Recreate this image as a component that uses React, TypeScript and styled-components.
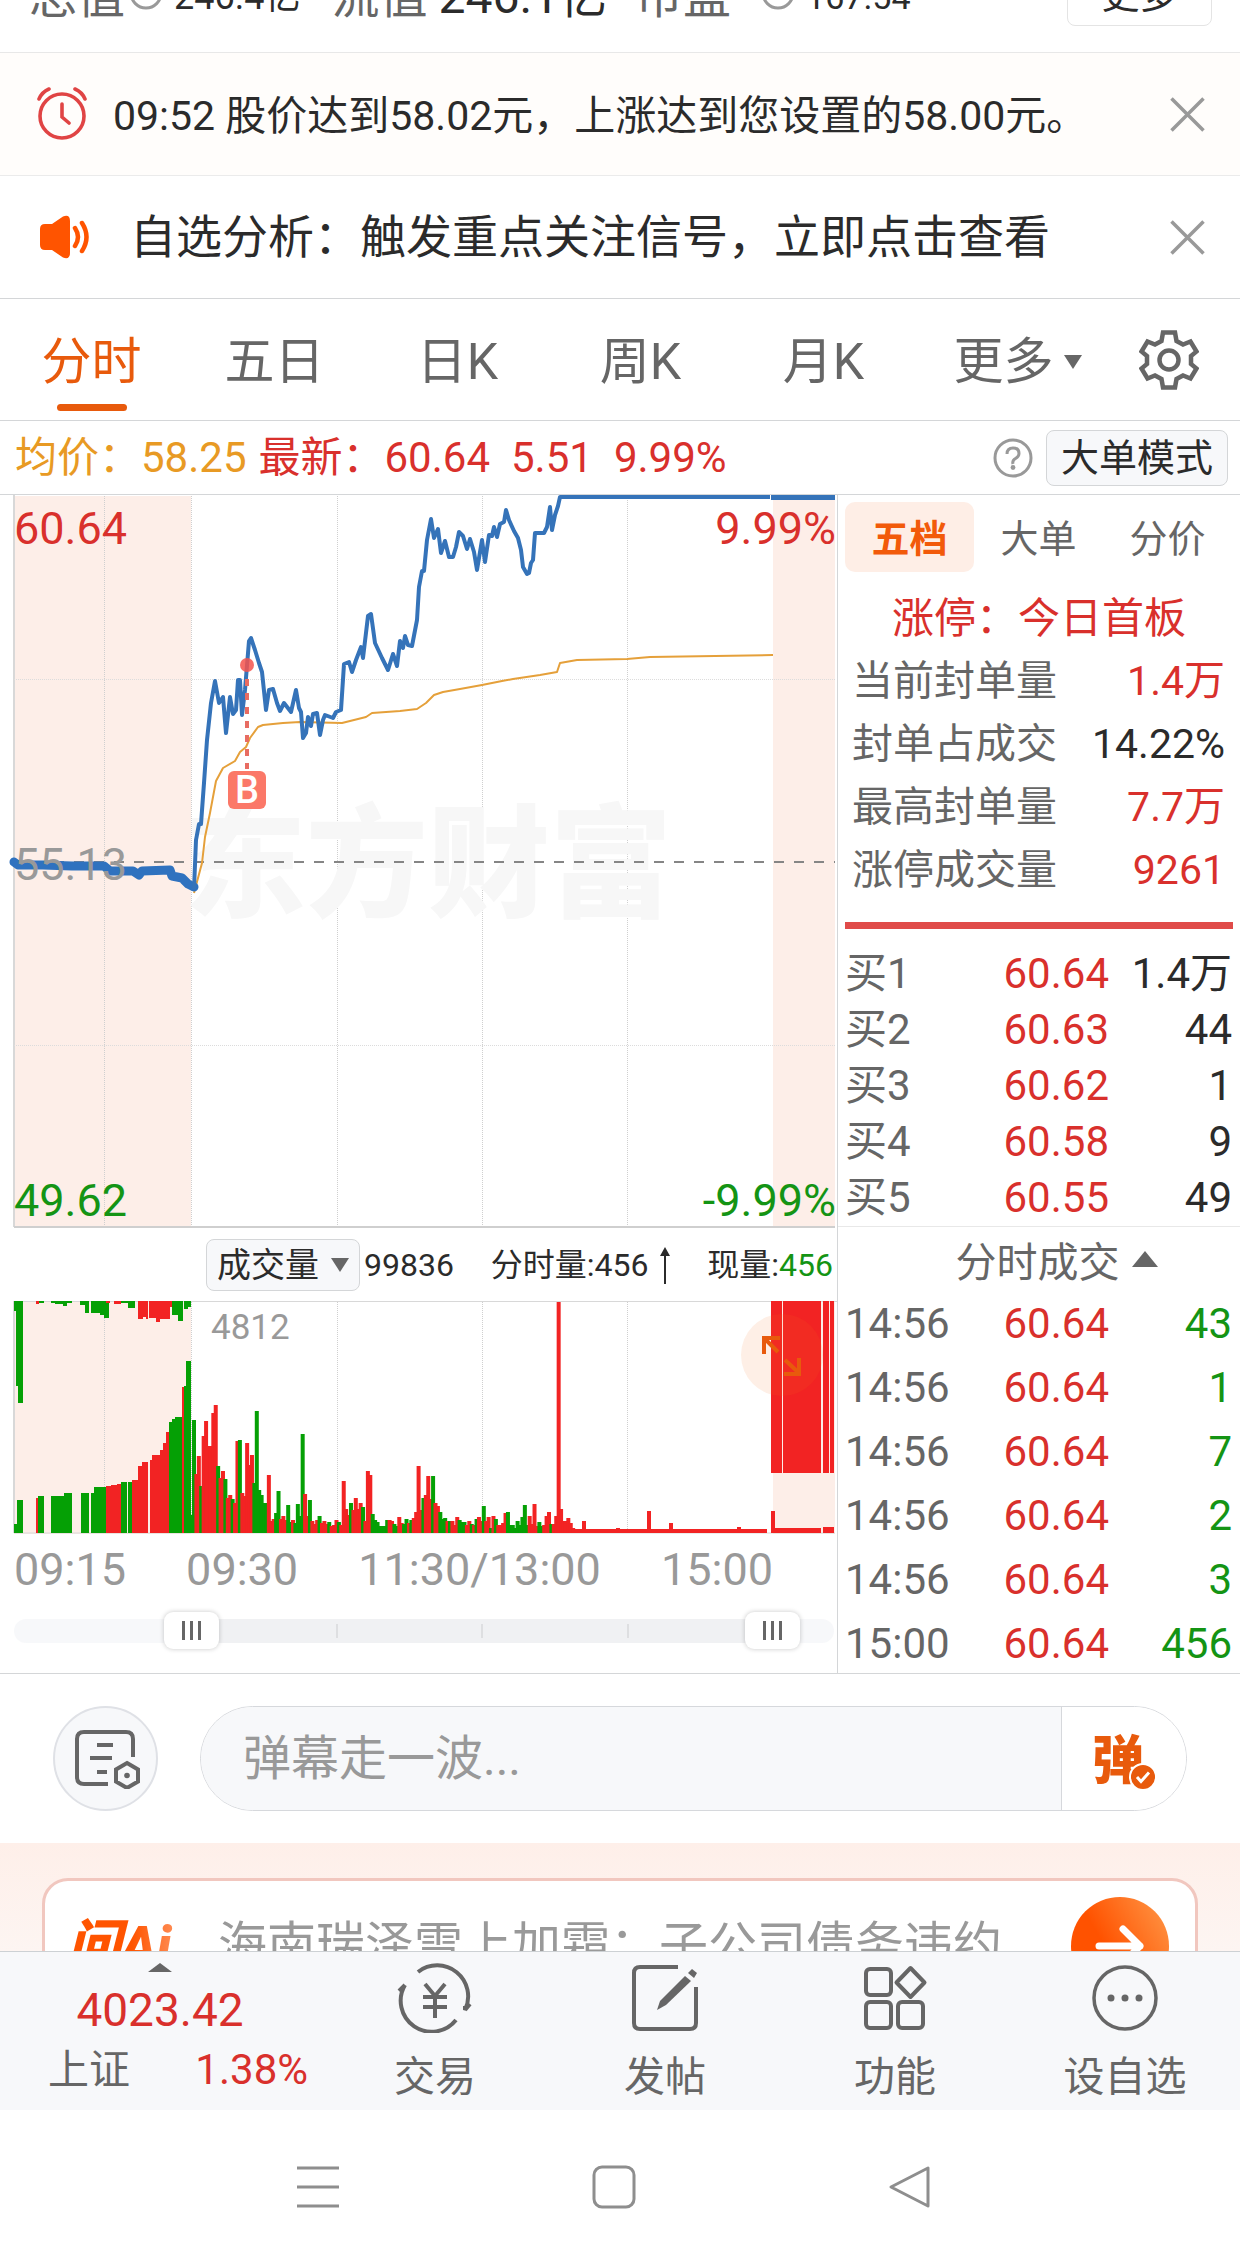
import React, { useState } from "react";
import styled, { createGlobalStyle, css } from "styled-components";

const RED = "#d9302c";
const GREEN = "#149414";
const ORANGE = "#e85a0c";
const GREY = "#666666";
const MUTED = "#999999";
const INK = "#2b2b2b";
const LINE = "#d4d6d8";
const PANEL = "#f7f8fa";
const BLUSH = "#fdeee8";
const FONT = 'Roboto, "Noto Sans CJK SC", sans-serif';

const GlobalStyle = createGlobalStyle`
  *, *::before, *::after { box-sizing: border-box; }
  body { margin: 0; background: #fff; font-family: ${FONT}; color: ${INK}; }
  button, input { font-family: inherit; }
  svg { display: block; flex: none; }
`;

const Page = styled.div`
  display: flex;
  flex-direction: column;
  overflow: hidden;
`;

const PlainButton = styled.button`
  display: flex;
  align-items: center;
  justify-content: center;
  padding: 0;
  border: 0;
  background: none;
  color: inherit;
  white-space: nowrap;
  cursor: pointer;
`;

/* ---------- header figures ---------- */

const Figures = styled.header`
  display: flex;
  align-items: flex-end;
  height: 53px;
  padding: 0 28px 26px 29px;
  border-bottom: 1px solid #e8e8e8;
  overflow: hidden;
`;

const FigureLabel = styled.span`
  font-size: 48px;
  line-height: 60px;
  margin-bottom: -1px;
  color: ${GREY};
  white-space: nowrap;
`;

const FigureValue = styled.span<{ $size: number }>`
  font-size: ${(p) => p.$size}px;
  line-height: ${(p) => (p.$size > 40 ? 60 : 48)}px;
  margin: ${(p) => (p.$size > 40 ? "0 28px -1px 11px" : "0 31px 5px 11px")};
  white-space: nowrap;
`;

const RingGap = styled.span<{ $wide?: boolean }>`
  margin: 0 0 16px ${(p) => (p.$wide ? 30 : 4)}px;
`;

const OutlineButton = styled(PlainButton)<{ $filled?: boolean }>`
  height: 56px;
  padding: 0 14px;
  border: 1px solid ${LINE};
  border-radius: 8px;
  background: ${(p) => (p.$filled ? PANEL : "#fff")};
  font-size: 38px;
  line-height: 48px;
  color: ${INK};
`;

const MoreButton = styled(OutlineButton)`
  align-items: flex-start;
  width: 145px;
  margin-left: auto;
  padding: 0;
  border-color: #e4e4e4;
`;

/* ---------- notices ---------- */

const Notice = styled.section<{ $warm?: boolean }>`
  display: flex;
  align-items: center;
  height: 123px;
  padding: 0 35px 0 36px;
  border-bottom: 1px solid ${(p) => (p.$warm ? "#ebebeb" : LINE)};
  background: ${(p) => (p.$warm ? "#fffdfb" : "#fff")};
`;

const NoticeText = styled.p<{ $large?: boolean }>`
  flex: 1;
  margin: 0 0 0 ${(p) => (p.$large ? 40 : 25)}px;
  padding-top: ${(p) => (p.$large ? 0 : 4)}px;
  font-size: ${(p) => (p.$large ? 46 : 41)}px;
  line-height: 60px;
  white-space: nowrap;
`;

/* ---------- period tabs ---------- */

const PeriodBar = styled.nav`
  display: grid;
  grid-template-columns: repeat(6, minmax(0, 1fr)) 142px;
  height: 122px;
  border-bottom: 1px solid ${LINE};
`;

const PeriodTab = styled(PlainButton)<{ $active?: boolean; $menu?: boolean }>`
  position: relative;
  gap: 10px;
  padding-top: 4px;
  padding-left: ${(p) => (p.$menu ? 22 : 0)}px;
  font-size: 50px;
  line-height: 60px;
  color: ${(p) => (p.$active ? ORANGE : GREY)};
  ${(p) =>
    p.$active &&
    css`
      &::after {
        content: "";
        position: absolute;
        bottom: 9px;
        left: 50%;
        width: 70px;
        height: 7px;
        margin-left: -35px;
        border-radius: 4px;
        background: ${ORANGE};
      }
    `}
`;

const SummaryBar = styled.section`
  display: flex;
  align-items: center;
  height: 74px;
  padding: 0 12px 0 15px;
  border-bottom: 1px solid ${LINE};
  font-size: 42px;
  line-height: 60px;
  color: ${RED};
  white-space: nowrap;
`;

const Average = styled.span`
  margin-right: 12px;
  color: #e89a24;
`;

const Figure = styled.span`
  margin-right: 21px;
`;

const SummaryActions = styled.div`
  display: flex;
  align-items: center;
  gap: 13px;
  margin-left: auto;
`;

/* ---------- main split ---------- */

const Split = styled.main`
  display: grid;
  grid-template-columns: minmax(0, 838fr) minmax(0, 402fr);
  border-bottom: 1px solid ${LINE};
`;

const ChartColumn = styled.div`
  display: flex;
  flex-direction: column;
  border-right: 1px solid ${LINE};
`;

const Chart = styled.svg`
  width: 100%;
  height: auto;
  font-family: ${FONT};
`;

const VolumeBar = styled.div`
  display: flex;
  align-items: center;
  justify-content: space-between;
  height: 73px;
  padding: 0 4px 0 206px;
  font-size: 32px;
  line-height: 48px;
  white-space: nowrap;
`;

const VolumeGroup = styled.div<{ $gap: number }>`
  display: flex;
  align-items: center;
  gap: ${(p) => p.$gap}px;
`;

const VolumeButton = styled(OutlineButton)`
  height: 52px;
  padding: 0 10px;
  gap: 12px;
  font-size: 34px;
`;

const Current = styled.span`
  color: ${GREEN};
`;

const TimeAxis = styled.div`
  display: flex;
  justify-content: space-between;
  padding: 6px 64px 0 14px;
  font-size: 45px;
  line-height: 60px;
  color: ${MUTED};
`;

const Range = styled.div`
  position: relative;
  height: 37px;
  margin: 12px 3px 24px 14px;
`;

const Rail = styled.div`
  position: absolute;
  inset: 7px 0 6px;
  border-radius: 12px;
  background: linear-gradient(90deg, ${PANEL} 22%, #f0f1f3 22% 92%, ${PANEL} 92%);
`;

const Tick = styled.span`
  position: absolute;
  top: 5px;
  width: 2px;
  height: 14px;
  background: #dedfe1;
`;

const Knob = styled.input`
  position: absolute;
  inset: 0;
  width: 100%;
  height: 37px;
  margin: 0;
  appearance: none;
  background: none;
  pointer-events: none;
  &::-webkit-slider-thumb {
    appearance: none;
    width: 55px;
    height: 37px;
    border: 0;
    border-radius: 9px;
    background:
      linear-gradient(#666, #666) 18px 9px / 3px 19px no-repeat,
      linear-gradient(#666, #666) 26px 9px / 3px 19px no-repeat,
      linear-gradient(#666, #666) 34px 9px / 3px 19px no-repeat,
      #fff;
    box-shadow: 0 0 5px rgba(0, 0, 0, 0.22);
    pointer-events: auto;
  }
`;

/* ---------- order panel ---------- */

const OrderColumn = styled.aside`
  display: flex;
  flex-direction: column;
  padding-top: 7px;
  line-height: 48px;
  white-space: nowrap;
`;

const OrderTabs = styled.div`
  display: grid;
  grid-template-columns: repeat(3, minmax(0, 1fr));
  padding: 0 8px 0 7px;
`;

const OrderTab = styled(PlainButton)<{ $active?: boolean }>`
  height: 70px;
  padding-bottom: 3px;
  border-radius: 10px;
  font-size: 38px;
  font-weight: ${(p) => (p.$active ? 700 : 400)};
  color: ${(p) => (p.$active ? "#f25a0a" : GREY)};
  background: ${(p) => (p.$active ? "#feeee6" : "none")};
`;

const LimitTitle = styled.h2`
  margin: 15px 0 0;
  font-size: 42px;
  font-weight: 400;
  line-height: 63px;
  text-align: center;
  color: ${RED};
`;

const LimitList = styled.dl`
  margin: 0 7px;
  padding: 0 8px 20px 7px;
  border-bottom: 7px solid #e04b49;
`;

const LimitRow = styled.div`
  display: flex;
  justify-content: space-between;
  font-size: 41px;
  line-height: 63px;
`;

const LimitName = styled.dt`
  color: ${GREY};
`;

const LimitValue = styled.dd<{ $plain?: boolean }>`
  margin: 0;
  color: ${(p) => (p.$plain ? INK : RED)};
`;

const QuoteTable = styled.table<{ $pitch: number; $top: number; $bottom: number }>`
  width: 100%;
  table-layout: fixed;
  border-collapse: collapse;
  font-size: 42px;
  line-height: ${(p) => p.$pitch}px;
  margin: ${(p) => `${p.$top}px 0 ${p.$bottom}px`};
`;

const QuoteName = styled.th`
  width: 126px;
  padding: 0 0 0 7px;
  font-weight: 400;
  text-align: left;
  color: ${GREY};
`;

const QuotePrice = styled.td`
  width: 145px;
  padding: 0;
  text-align: right;
  color: ${RED};
`;

const QuoteSize = styled.td<{ $sell?: boolean }>`
  padding: 0 8px 0 0;
  text-align: right;
  color: ${(p) => (p.$sell ? GREEN : INK)};
`;

const TradesToggle = styled(PlainButton)`
  height: 66px;
  gap: 12px;
  padding: 0 0 2px 35px;
  border-top: 1px solid #e8e8e8;
  font-size: 41px;
  color: ${GREY};
`;

/* ---------- comment bar ---------- */

const CommentBar = styled.form`
  display: flex;
  align-items: center;
  height: 169px;
  padding: 0 53px;
  gap: 42px;
`;

const RoundButton = styled(PlainButton)`
  width: 105px;
  height: 105px;
  border: 2px solid #dfe1e6;
  border-radius: 50%;
  background: ${PANEL};
`;

const CommentField = styled.div`
  display: flex;
  flex: 1;
  height: 105px;
  border: 1px solid #d6d8dc;
  border-radius: 53px;
  overflow: hidden;
`;

const CommentInput = styled.input`
  flex: 1;
  min-width: 0;
  padding: 0 0 0 42px;
  border: 0;
  background: ${PANEL};
  font-size: 48px;
  line-height: 60px;
  &::placeholder { color: ${MUTED}; opacity: 1; }
`;

const BulletButton = styled(PlainButton)`
  position: relative;
  width: 125px;
  padding: 0 12px 4px 0;
  border-left: 1px solid #d6d8dc;
  background: #fff;
  font-size: 52px;
  font-weight: 900;
  color: ${ORANGE};
`;

const Badge = styled.span`
  position: absolute;
  right: 29px;
  bottom: 19px;
`;

/* ---------- AI prompt ---------- */

const AiSection = styled.section`
  height: 108px;
  padding: 35px 42px 0;
  background: linear-gradient(#feefe9, #fdf5f2);
  overflow: hidden;
`;

const AiCard = styled.div`
  display: flex;
  align-items: center;
  height: 136px;
  padding: 0 26px 0 22px;
  border: 3px solid #f1c7bf;
  border-radius: 26px;
  background: #fff;
`;

const AiBrand = styled.strong`
  width: 118px;
  font-size: 54px;
  font-style: italic;
  font-weight: 900;
  line-height: 60px;
  color: transparent;
  background: linear-gradient(90deg, #ff5400 55%, #ff9a68);
  background-clip: text;
  white-space: nowrap;
`;

const AiQuestion = styled.a`
  flex: 1;
  margin-left: 33px;
  font-size: 49px;
  line-height: 60px;
  color: ${MUTED};
  text-decoration: none;
  white-space: nowrap;
`;

const AiGo = styled(PlainButton)`
  width: 98px;
  height: 98px;
  border-radius: 50%;
  background: linear-gradient(60deg, #ff5200 40%, #ff9a4a);
`;

/* ---------- bottom bars ---------- */

const BottomNav = styled.nav`
  display: grid;
  grid-template-columns: 320px repeat(4, minmax(0, 1fr));
  height: 159px;
  border-top: 1px solid #cdd1d4;
  background: ${PANEL};
`;

const IndexCard = styled.a`
  display: flex;
  flex-direction: column;
  align-items: center;
  padding-top: 11px;
  color: ${RED};
  text-decoration: none;
`;

const IndexValue = styled.span`
  margin-top: 8px;
  font-size: 46px;
  line-height: 60px;
`;

const IndexRow = styled.span`
  display: flex;
  align-items: center;
  justify-content: space-between;
  width: 260px;
  margin-left: 36px;
  font-size: 42px;
  line-height: 60px;
`;

const IndexName = styled.span`
  font-size: 41px;
  color: ${GREY};
`;

const NavItem = styled(PlainButton)`
  flex-direction: column;
  justify-content: flex-start;
  padding-top: 11px;
  gap: 14px;
  font-size: 41px;
  line-height: 60px;
  color: ${GREY};
`;

const SystemNav = styled.footer`
  display: flex;
  align-items: center;
  justify-content: center;
  gap: 250px;
  height: 153px;
  padding-right: 12px;
`;

/* ---------- icons ---------- */

const Close = () => (
  <svg width="35" height="35" viewBox="0 0 35 35" stroke="#999" strokeWidth="3.500">
    <path d="M1.5 1.5L33.500 33.500M33.500 1.500L1.500 33.500" />
  </svg>
);

const Ring = () => (
  <svg width="34" height="34" viewBox="0 0 34 34" fill="none" stroke={MUTED} strokeWidth="3">
    <circle cx="17" cy="17" r="15" />
  </svg>
);

const AlarmIcon = () => (
  <svg width="52" height="54" viewBox="0 0 52 54" fill="none" stroke="#e04444" strokeWidth="3.600" strokeLinecap="round">
    <circle cx="26" cy="29" r="22" />
    <path d="M26 17v13l7 6M3 12Q6 5 13 2M49 12Q46 5 39 2" />
  </svg>
);

const SpeakerIcon = () => (
  <svg width="54" height="44" viewBox="0 0 54 44">
    <path
      d="M9 9h7L27 1.500Q34-1 34 6v32q0 7-7 4.500L16 35H9q-5 0-5-5V14q0-5 5-5z"
      fill="#ff5400"
    />
    <path d="M39 13q6 9 0 18M46 8q9 14 0 28" fill="none" stroke="#ff5400" strokeWidth="4.500" strokeLinecap="round" />
  </svg>
);

const GearIcon = () => (
  <svg width="60" height="60" viewBox="-30 -30 60 60" fill="none" stroke={GREY} strokeWidth="4.500">
    <path d="M-6-27.500H6L7.500-19 14-15.500 21.500-18.500 27.500-8.500 22-4V4L27.500 8.500 21.500 18.500 14 15.500 7.500 19 6 27.500H-6L-7.500 19-14 15.500-21.500 18.500-27.500 8.500-22 4V-4L-27.500-8.500-21.500-18.500-14-15.500-7.500-19Z" />
    <circle r="9.500" />
  </svg>
);

const HelpIcon = () => (
  <svg width="40" height="40" viewBox="0 0 40 40" fill="none" stroke={MUTED} strokeWidth="3">
    <circle cx="20" cy="20" r="18" />
    <path d="M14 16q0-6 6-6t6 5.500q0 3-3.500 5T20 26" />
    <circle cx="20" cy="29.500" r="2.400" fill={MUTED} stroke="none" />
  </svg>
);

const Triangle = ({ w, h, up }: { w: number; h: number; up?: boolean }) => (
  <svg width={w} height={h} viewBox="0 0 10 10" preserveAspectRatio="none" fill={GREY}>
    <path d={up ? "M0 10L5 0L10 10Z" : "M0 0H10L5 10Z"} />
  </svg>
);

const UpArrow = () => (
  <svg width="10" height="38" viewBox="0 0 10 38" fill={INK}>
    <path d="M5 1l5 9H6v28H4V10H0z" />
  </svg>
);

const NoteIcon = () => (
  <svg width="68" height="60" viewBox="0 0 68 60" fill="none" stroke={GREY} strokeWidth="4">
    <path d="M61 28V10q0-7-7-7H12q-7 0-7 7v38q0 7 7 7h24" />
    <path d="M25 16h16M18 29h22M25 43h10" />
    <path d="M55 34l11 6.500v12L55 59l-11-6.500v-12z" />
    <circle cx="55" cy="46.500" r="2.800" fill={GREY} stroke="none" />
  </svg>
);

const CheckBadge = () => (
  <svg width="28" height="28" viewBox="0 0 28 28">
    <circle cx="14" cy="14" r="13" fill={ORANGE} stroke="#fff" strokeWidth="2" />
    <path d="M8 14l4 4.500 8-9" fill="none" stroke="#fff" strokeWidth="3" />
  </svg>
);

const TradeIcon = () => (
  <svg width="78" height="70" viewBox="0 0 78 70" fill="none" stroke={GREY} strokeWidth="4">
    <path d="M22 9A31 31 0 0 1 69 47V43M69 47l5-6M60 57A31 31 0 0 1 9 22M9 22l-6 6" />
    <path d="M29 21l10 12 10-12M39 33v22M27 34h24M27 44h24" />
  </svg>
);

const PostIcon = () => (
  <svg width="70" height="70" viewBox="0 0 70 70" fill="none" stroke={GREY} strokeWidth="4">
    <path d="M48 4H10q-6 0-6 6v50q0 6 6 6h50q6 0 6-6V24" />
    <path d="M27 47l3-9L55 13l6 5L36 42z" fill={GREY} stroke="none" />
    <path d="M58 10l4-4 5 4-3 5z" fill={GREY} stroke="none" />
  </svg>
);

const GridIcon = () => (
  <svg width="66" height="70" viewBox="0 0 66 70" fill="none" stroke={GREY} strokeWidth="4" strokeLinejoin="round">
    <rect x="4" y="6" width="25" height="26" rx="4" />
    <rect x="4" y="39" width="25" height="26" rx="4" />
    <rect x="36" y="39" width="25" height="26" rx="4" />
    <path d="M48.500 5L62.500 19.500 48.500 34 34.500 19.500Z" />
  </svg>
);

const MoreIcon = () => (
  <svg width="70" height="70" viewBox="0 0 70 70" fill="none" stroke={GREY} strokeWidth="3.500">
    <circle cx="35" cy="35" r="31" />
    <g fill={GREY} stroke="none">
      <circle cx="21" cy="35" r="3.500" />
      <circle cx="35" cy="35" r="3.500" />
      <circle cx="49" cy="35" r="3.500" />
    </g>
  </svg>
);

/* ---------- chart data ---------- */

const AUCTION =
  "14,367 18,370 43,370 72,371 104,371 110,376 133,376 139,380 142,376 170,375 172,381 182,383 188,389 194,392";

const PRICE =
  "194,394 196,345 199,329 201,329 204,288 207,245 211,208 215,186 219,208 223,202 226,238 230,202 233,219 236,215 238,185 240,185 242,220 245,195 249,146 251,143 255,155 259,168 262,177 266,215 269,195 273,194 277,208 280,216 284,208 291,217 296,195 299,213 301,217 303,243 306,238 308,222 311,231 313,219 317,218 320,240 323,225 325,220 333,223 336,217 341,215 344,169 349,167 352,177 356,165 361,152 363,163 368,121 371,119 375,148 382,163 388,175 393,159 397,171 400,146 403,153 405,141 408,150 412,151 417,125 419,92 422,76 424,76 427,45 431,24 434,43 438,34 441,58 445,46 449,62 453,62 456,52 459,37 463,41 467,54 470,44 474,57 477,75 482,45 485,67 489,40 492,41 494,32 497,42 500,29 504,27 506,15 509,25 514,36 518,43 521,55 523,72 527,79 529,78 531,68 533,65 535,38 544,38 547,32 550,12 552,35 555,20 558,11 560,2 770,2";

const AVERAGE =
  "194,398 202,368 205,342 210,318 216,286 223,273 235,266 240,257 246,252 250,243 258,232 263,230 283,228 300,227 342,228 366,222 372,218 400,216 417,214 426,208 434,200 443,197 460,194 482,190 502,186 513,184 540,180 557,177 560,168 577,165 627,164 650,162 773,160";

const MINUTES =
  "g113 r59 r77 g47 r97 r112 r87 r87 r120 r128 g67 r55 r62 g54 r35 r38 g34 r30 r92 g93 r40 r37 r90 r68 r78 g50 g122 g43 g38 g30 g30 r58 r12 r14 g20 g42 r14 r17 r13 g28 g11 r13 g10 g29 g17 g99 r39 r17 g33 r12 r9 r13 g17 r10 r12 r9 g11 r7 r8 r13 g11 r8 r52 r24 r18 g30 r23 r35 r24 r30 g26 r12 r62 r58 g19 g13 g11 g7 g7 g7 g13 r13 r12 g9 g7 r16 r10 g9 g14 r10 g13 r15 r21 r67 r23 g35 r38 r57 r34 g57 r30 r27 g21 g14 g15 r12 g12 r12 r8 r16 g13 g11 g11 r8 r12 g9 r8 g14 r16 r12 g27 r12 r16 g5 r17 g14 r8 r8 r10 r20 g21 g8 g8 g5 g12 g8 g16 g28 g8 r17 r9 r29 r7 g11 g7 r8 r17 r21 g9 r9 r17 r231 r24 r12 r12 r15 r10 r5";

// [x, width, height, colour]
type Block = [number, number, number, "r" | "g"];

const AUCTION_MATCHED: Block[] = [
  [14, 3, 9, "g"], [17, 6, 33, "g"], [36, 2, 35, "r"], [38, 6, 37, "g"], [51, 14, 37, "g"],
  [64, 4, 40, "g"], [68, 4, 40, "g"], [81, 4, 40, "g"], [85, 4, 40, "g"], [91, 3, 40, "g"],
  [94, 12, 46, "g"], [106, 5, 47, "r"], [111, 6, 48, "r"], [117, 4, 49, "r"], [121, 6, 51, "g"],
  [128, 4, 51, "g"], [132, 6, 53, "r"], [138, 4, 67, "r"], [142, 6, 71, "r"], [150, 2, 73, "r"],
  [152, 8, 78, "r"], [160, 3, 83, "r"], [163, 3, 90, "r"], [166, 3, 101, "r"], [169, 3, 111, "g"],
  [172, 3, 114, "g"], [175, 7, 116, "g"], [182, 2, 146, "r"], [184, 3, 147, "g"], [186, 5, 172, "g"],
  [191, 2, 18, "g"],
];

const AUCTION_UNMATCHED: Block[] = [
  [14, 3, 10, "g"], [16, 2, 85, "g"], [18, 5, 102, "g"], [36, 3, 3, "r"], [39, 5, 2, "g"],
  [51, 4, 2, "g"], [55, 8, 3, "g"], [63, 4, 5, "g"], [67, 5, 2, "g"], [80, 5, 4, "g"],
  [85, 4, 12, "g"], [91, 9, 12, "g"], [100, 4, 14, "g"], [104, 5, 17, "g"], [106, 4, 2, "r"],
  [114, 7, 3, "r"], [121, 7, 2, "g"], [128, 7, 7, "g"], [138, 5, 18, "r"], [143, 3, 16, "r"],
  [146, 2, 18, "r"], [149, 7, 17, "r"], [156, 4, 21, "r"], [160, 10, 18, "r"], [170, 2, 6, "r"],
  [172, 6, 14, "g"], [178, 5, 20, "g"], [184, 4, 8, "g"], [188, 3, 6, "g"],
  [771, 11, 172, "r"], [783, 38, 172, "r"], [823, 6, 172, "r"], [830, 4, 172, "r"],
];

const LATE: Block[] = [
  [575, 192, 4, "r"], [582, 4, 12, "r"], [616, 4, 5, "r"], [647, 4, 22, "r"], [669, 4, 10, "r"],
  [737, 4, 6, "r"], [771, 4, 22, "r"], [775, 46, 5, "r"], [823, 11, 6, "r"],
];

const paint = (c: string) => (c === "r" ? "#f22323" : "#05a005");

const Guides = ({ height }: { height: number }) => (
  <>
    <rect x="14" y="1" width="177" height={height} fill={BLUSH} />
    <rect x="773" y="1" width="62" height={height} fill={BLUSH} />
    <g stroke="#cfcfcf" strokeDasharray="1 1">
      {[104.5, 191.5, 337.5, 482.5, 627.5].map((x) => (
        <line key={x} x1={x} x2={x} y1="1" y2={height} />
      ))}
    </g>
    <line x1="14" x2="14" y1="0" y2={height} stroke="#d8d8d8" strokeWidth="2" />
  </>
);

const PriceChart = () => (
  <Chart viewBox="0 0 837 733" role="img" aria-label="分时">
    <Guides height={732} />
    <text x="184" y="412" fontSize="122" fontWeight="900" fill="#f7f7f7">东方财富</text>
    <g stroke="#dcdcdc" strokeDasharray="1 1">
      <line x1="14" x2="835" y1="184.500" y2="184.500" />
      <line x1="14" x2="835" y1="550.500" y2="550.500" />
    </g>
    <line x1="14" x2="835" y1="367" y2="367" stroke="#858585" strokeWidth="2" strokeDasharray="10 10" />
    <line x1="14" x2="835" y1="732" y2="732" stroke="#cfcfcf" strokeWidth="2" />
    <g fill="none" strokeLinejoin="round">
      <polyline points={AVERAGE} stroke="#e5a03a" strokeWidth="2" />
      <polyline points={AUCTION} stroke="#2f72bf" strokeWidth="9" strokeLinecap="round" />
      <polyline points={PRICE} stroke="#3573b9" strokeWidth="4" />
      <path d="M771 2H835" stroke="#3573b9" strokeWidth="6" />
    </g>
    <path d="M247 184V274" stroke="#e86c62" strokeWidth="4" strokeDasharray="7 7" />
    <circle cx="247" cy="170" r="7" fill="#f5544c" fillOpacity="0.850" />
    <rect x="228" y="276" width="38" height="38" rx="6" fill="#fb7868" />
    <text x="247" y="308" fontSize="38" fontWeight="500" textAnchor="middle" fill="#fff">B</text>
    <g fontSize="45">
      <text x="14" y="49" fill={RED}>60.64</text>
      <text x="836" y="49" fill={RED} textAnchor="end">9.99%</text>
      <text x="14" y="385" fill={MUTED}>55.13</text>
      <text x="14" y="721" fill={GREEN}>49.62</text>
      <text x="836" y="721" fill={GREEN} textAnchor="end">-9.99%</text>
    </g>
  </Chart>
);

const VolumeChart = () => (
  <Chart viewBox="0 0 837 233" role="img" aria-label="成交量">
    <Guides height={232} />
    <line x1="14" x2="837" y1="0.500" y2="0.500" stroke="#d8d8d8" />
    <line x1="14" x2="835" y1="232" y2="232" stroke="#d8d8d8" />
    {AUCTION_MATCHED.map(([x, w, h, c], i) => (
      <rect key={i} x={x} y={232 - h} width={w} height={h} fill={paint(c)} />
    ))}
    {AUCTION_UNMATCHED.map(([x, w, h, c], i) => (
      <rect key={i} x={x} y="0" width={w} height={h} fill={paint(c)} />
    ))}
    {MINUTES.split(" ").map((bar, i) => {
      const h = Number(bar.slice(1));
      return <rect key={i} x={192 + i * 2.415} y={232 - h} width="4" height={h} fill={paint(bar[0])} />;
    })}
    {LATE.map(([x, w, h, c], i) => (
      <rect key={i} x={x} y={232 - h} width={w} height={h} fill={paint(c)} />
    ))}
    <text x="211" y="38" fontSize="35" fill={MUTED}>4812</text>
    <circle cx="782" cy="54" r="41" fill="#f26a1c" fillOpacity="0.110" />
    <g fill="none" stroke={ORANGE} strokeWidth="4">
      <path d="M778 51L765 38M764 53V37H780M785 59L799 72M784 73H799V57" />
    </g>
  </Chart>
);

/* ---------- content ---------- */

const PERIODS = ["分时", "五日", "日K", "周K", "月K"];

const LIMITS = [
  { name: "当前封单量", value: "1.4万" },
  { name: "封单占成交", value: "14.22%", plain: true },
  { name: "最高封单量", value: "7.7万" },
  { name: "涨停成交量", value: "9261" },
];

const BIDS = [
  ["买1", "60.64", "1.4万"],
  ["买2", "60.63", "44"],
  ["买3", "60.62", "1"],
  ["买4", "60.58", "9"],
  ["买5", "60.55", "49"],
];

const TRADES = [
  ["14:56", "60.64", "43"],
  ["14:56", "60.64", "1"],
  ["14:56", "60.64", "7"],
  ["14:56", "60.64", "2"],
  ["14:56", "60.64", "3"],
  ["15:00", "60.64", "456"],
];

const Quotes = ({
  rows,
  pitch,
  top,
  bottom,
  sell,
}: {
  rows: string[][];
  pitch: number;
  top: number;
  bottom: number;
  sell?: boolean;
}) => (
  <QuoteTable $pitch={pitch} $top={top} $bottom={bottom}>
    <tbody>
      {rows.map(([name, price, size], i) => (
        <tr key={i}>
          <QuoteName scope="row">{name}</QuoteName>
          <QuotePrice>{price}</QuotePrice>
          <QuoteSize $sell={sell}>{size}</QuoteSize>
        </tr>
      ))}
    </tbody>
  </QuoteTable>
);

export default function App() {
  const [from, setFrom] = useState(196);
  const [to, setTo] = useState(955);

  return (
    <Page>
      <GlobalStyle />
      <Figures>
        <FigureLabel>总值</FigureLabel>
        <RingGap><Ring /></RingGap>
        <FigureValue $size={36}>246.4亿</FigureValue>
        <FigureLabel>流值</FigureLabel>
        <FigureValue $size={48}>246.1亿</FigureValue>
        <FigureLabel>市盈</FigureLabel>
        <RingGap $wide><Ring /></RingGap>
        <FigureValue $size={34}>167.54</FigureValue>
        <MoreButton>更多</MoreButton>
      </Figures>

      <Notice $warm>
        <AlarmIcon />
        <NoticeText>09:52 股价达到58.02元，上涨达到您设置的58.00元。</NoticeText>
        <PlainButton aria-label="关闭"><Close /></PlainButton>
      </Notice>
      <Notice>
        <SpeakerIcon />
        <NoticeText $large>自选分析：触发重点关注信号，立即点击查看</NoticeText>
        <PlainButton aria-label="关闭"><Close /></PlainButton>
      </Notice>

      <PeriodBar>
        {PERIODS.map((p, i) => (
          <PeriodTab key={p} $active={i === 0}>{p}</PeriodTab>
        ))}
        <PeriodTab $menu>更多<Triangle w={18} h={14} /></PeriodTab>
        <PlainButton aria-label="设置"><GearIcon /></PlainButton>
      </PeriodBar>

      <SummaryBar>
        <Average>均价：58.25</Average>
        <Figure>最新：60.64</Figure>
        <Figure>5.51</Figure>
        <Figure>9.99%</Figure>
        <SummaryActions>
          <HelpIcon />
          <OutlineButton $filled>大单模式</OutlineButton>
        </SummaryActions>
      </SummaryBar>

      <Split>
        <ChartColumn>
          <PriceChart />
          <VolumeBar>
            <VolumeGroup $gap={4}>
              <VolumeButton $filled>成交量<Triangle w={18} h={14} /></VolumeButton>
              <span>99836</span>
            </VolumeGroup>
            <VolumeGroup $gap={12}>
              <span>分时量:456</span>
              <UpArrow />
            </VolumeGroup>
            <span>现量:<Current>456</Current></span>
          </VolumeBar>
          <VolumeChart />
          <TimeAxis>
            <span>09:15</span>
            <span>09:30</span>
            <span>11:30/13:00</span>
            <span>15:00</span>
          </TimeAxis>
          <Range>
            <Rail>
              {[39.3, 57, 74.700].map((left) => (
                <Tick key={left} style={{ left: `${left}%` }} />
              ))}
            </Rail>
            <Knob
              type="range"
              aria-label="开始时间"
              min={0}
              max={1000}
              value={from}
              onChange={(e) => setFrom(Number(e.target.value))}
            />
            <Knob
              type="range"
              aria-label="结束时间"
              min={0}
              max={1000}
              value={to}
              onChange={(e) => setTo(Number(e.target.value))}
            />
          </Range>
        </ChartColumn>

        <OrderColumn>
          <OrderTabs>
            <OrderTab $active>五档</OrderTab>
            <OrderTab>大单</OrderTab>
            <OrderTab>分价</OrderTab>
          </OrderTabs>
          <LimitTitle>涨停：今日首板</LimitTitle>
          <LimitList>
            {LIMITS.map((l) => (
              <LimitRow key={l.name}>
                <LimitName>{l.name}</LimitName>
                <LimitValue $plain={l.plain}>{l.value}</LimitValue>
              </LimitRow>
            ))}
          </LimitList>
          <Quotes rows={BIDS} pitch={56} top={17} bottom={0} />
          <TradesToggle>分时成交<Triangle w={26} h={16} up /></TradesToggle>
          <Quotes rows={TRADES} pitch={64} top={0} bottom={-4} sell />
        </OrderColumn>
      </Split>

      <CommentBar onSubmit={(e) => e.preventDefault()}>
        <RoundButton type="button" aria-label="弹幕设置"><NoteIcon /></RoundButton>
        <CommentField>
          <CommentInput aria-label="弹幕" placeholder="弹幕走一波..." />
          <BulletButton type="button">
            弹
            <Badge><CheckBadge /></Badge>
          </BulletButton>
        </CommentField>
      </CommentBar>

      <AiSection>
        <AiCard>
          <AiBrand>问Ai</AiBrand>
          <AiQuestion href="#ai">海南瑞泽雪上加霜：子公司债务违约</AiQuestion>
          <AiGo aria-label="提问">
            <svg width="50" height="44" viewBox="0 0 50 44" fill="none" stroke="#fff" strokeWidth="7" strokeLinecap="round" strokeLinejoin="round">
              <path d="M4 22H45M28 5L45 22 28 39" />
            </svg>
          </AiGo>
        </AiCard>
      </AiSection>

      <BottomNav>
        <IndexCard href="#index">
          <Triangle w={24} h={9} up />
          <IndexValue>4023.42</IndexValue>
          <IndexRow>
            <IndexName>上证</IndexName>
            <span>1.38%</span>
          </IndexRow>
        </IndexCard>
        <NavItem><TradeIcon />交易</NavItem>
        <NavItem><PostIcon />发帖</NavItem>
        <NavItem><GridIcon />功能</NavItem>
        <NavItem><MoreIcon />设自选</NavItem>
      </BottomNav>

      <SystemNav>
        <PlainButton aria-label="最近任务">
          <svg width="46" height="46" viewBox="0 0 46 46" stroke="#8e8e8e" strokeWidth="3">
            <path d="M2 4H44M2 23H44M2 42H44" />
          </svg>
        </PlainButton>
        <PlainButton aria-label="主页">
          <svg width="46" height="46" viewBox="0 0 46 46" fill="none" stroke="#8e8e8e" strokeWidth="3">
            <rect x="3" y="3" width="40" height="40" rx="8" />
          </svg>
        </PlainButton>
        <PlainButton aria-label="返回">
          <svg width="46" height="46" viewBox="0 0 46 46" fill="none" stroke="#8e8e8e" strokeWidth="3" strokeLinejoin="round">
            <path d="M41 4V42L4 23Z" />
          </svg>
        </PlainButton>
      </SystemNav>
    </Page>
  );
}
